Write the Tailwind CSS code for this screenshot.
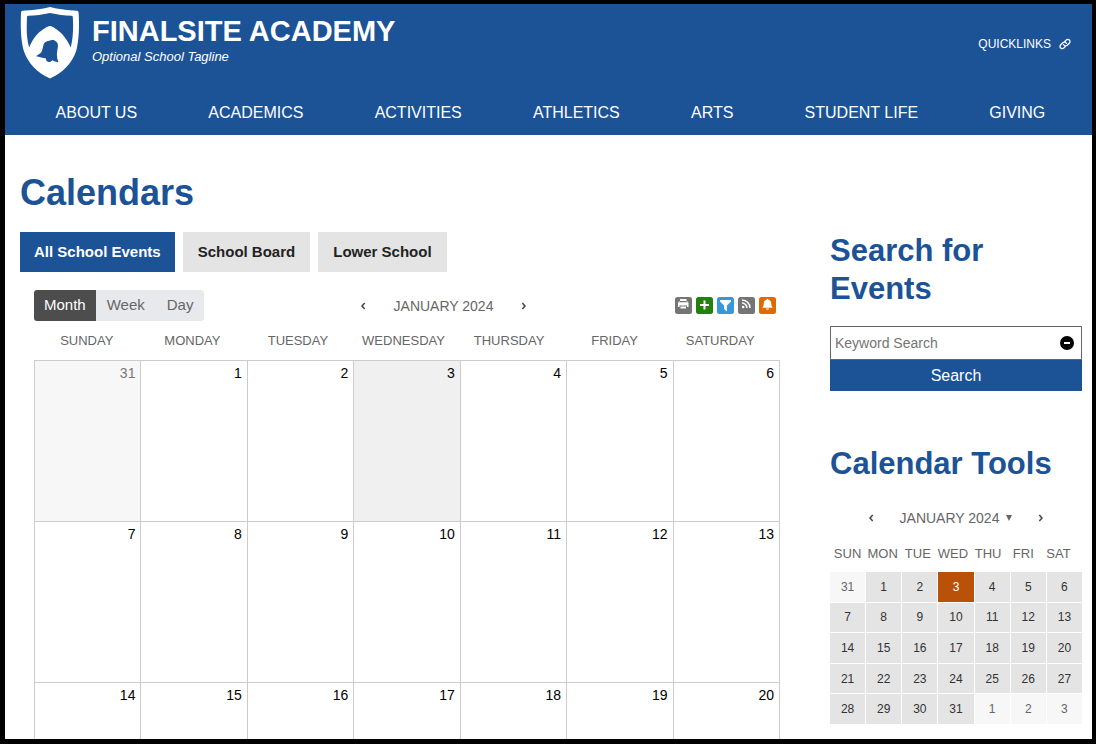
<!DOCTYPE html>
<html lang="en">
<head>
    <meta charset="UTF-8">
    <meta name="viewport" content="width=device-width, initial-scale=1.0">
    <title>Calendars - Finalsite Academy</title>
    <script src="https://cdn.jsdelivr.net/npm/@tailwindcss/browser@4"></script>
</head>
<body class="h-screen overflow-hidden bg-white border-black border-t-4 border-r-4 border-b-5 border-l-5 font-['Liberation_Sans',Arial,sans-serif] text-black">

    <!-- Header -->
    <header class="bg-[#1c5296] text-white px-[15px] h-[131px] flex flex-col justify-between">
        <div class="flex items-start justify-between">
            <a href="#" class="flex items-start gap-3 pt-[3px]">
                <svg class="w-[60px] h-[72px]" viewBox="0 0 60 72" aria-hidden="true">
                    <path fill="#fff" d="M30 0C38 2 49 3.500 57 3.700Q58.500 3.800 58.600 5.500C59.500 20 59 32 56.500 43C52.500 56 42 66.500 30 71.500C18 66.500 7.500 56 3.500 43C.700 32 .500 20 1 5.500Q1.200 3.800 2.500 3.700C11 3.500 22 2 30 0Z"/>
                    <path fill="#1c5296" d="M30 6C37 7.700 45 8.500 51.500 8.700Q52.700 8.800 52.800 10C53.500 22 53 32 50.700 40.500C47.500 33 43.500 28.500 41 26C37.500 23 33 19.200 30 19C27 19.200 22 23 18.500 26C16 28.500 12 33 9.300 40.500C6.500 32 6.500 22 7 10Q7.100 8.800 8.300 8.700C15 8.500 23 7.700 30 6Z"/>
                    <path fill="#1c5296" d="M31 33.200C32.500 32.800 34.500 33 35.700 34.300C37.500 35.700 38.200 37 37.900 39.500C37.300 44 36.800 46 36.900 48C37 50.500 37.500 53 38.400 55.300C36 54.700 34 54 32.300 53.200C31.500 54.300 30 55.200 28.700 55C27 54.700 25.800 53.500 26 51.500C23 51 19.500 50 16 49.300C18.500 47.500 20.500 46.500 21.600 44.800C22.800 42.500 22.700 39 24.200 36.300C25.500 34.200 28.500 33.700 31 33.200Z"/>
                </svg>
                <span class="flex flex-col pt-2">
                    <span class="text-[29px] leading-8 font-bold">FINALSITE ACADEMY</span>
                    <span class="text-[13px] leading-5 italic">Optional School Tagline</span>
                </span>
            </a>
            <a href="#" class="flex items-center gap-2 text-xs mt-8 mr-1.5">
                QUICKLINKS
                <svg class="size-3" viewBox="0 0 24 24" fill="none" stroke="currentColor" stroke-width="2.500" stroke-linecap="round" aria-hidden="true">
                    <path d="M9 13c1.500 3 5 3.500 7.500 1.500l4-4c4-5-1.500-10-6-6.500L11.500 7"/>
                    <path d="M15 11c-1.500-3-5-3.500-7.500-1.500l-4 4c-4 5 1.500 10 6 6.500L12.500 17"/>
                </svg>
            </a>
        </div>
        <nav class="flex justify-around -mr-1 pb-2.5 text-base">
            <a href="#">ABOUT US</a>
            <a href="#">ACADEMICS</a>
            <a href="#">ACTIVITIES</a>
            <a href="#">ATHLETICS</a>
            <a href="#">ARTS</a>
            <a href="#">STUDENT LIFE</a>
            <a href="#">GIVING</a>
        </nav>
    </header>

    <div class="pl-[15px] pr-2.5 pt-9">
        <h1 class="text-4xl leading-[44px] font-bold text-[#1c5296] mb-[17px]">Calendars</h1>

        <div class="flex gap-9">
            <!-- Main calendar -->
            <main class="flex-1 min-w-0">
                <div class="flex gap-2 text-[15px] font-bold text-[#222]">
                    <button class="h-10 px-3.5 bg-[#1c5296] text-white">All School Events</button>
                    <button class="h-10 px-[15px] bg-[#e4e4e4]">School Board</button>
                    <button class="h-10 px-[15px] bg-[#e4e4e4]">Lower School</button>
                </div>

                <div class="px-3.5 pt-[18px]">
                    <div class="grid grid-cols-3 items-center">
                        <div class="flex text-[15px] text-[#666]">
                            <button class="h-[31px] px-2.5 rounded-l-[3px] bg-[#4d4d4d] text-white">Month</button>
                            <button class="h-[31px] px-[11px] bg-[#e8e9ed]">Week</button>
                            <button class="h-[31px] px-[11px] rounded-r-[3px] bg-[#e8e9ed]">Day</button>
                        </div>
                        <div class="flex items-center justify-center gap-7 pl-[73px] text-sm text-[#666] whitespace-nowrap">
                            <button aria-label="Previous month">
                                <svg class="w-1.5 h-2" viewBox="0 0 6 8" fill="none" stroke="#444" stroke-width="1.500" aria-hidden="true"><path d="M4.700 1L2 4L4.700 7"/></svg>
                            </button>
                            <span>JANUARY 2024</span>
                            <button aria-label="Next month">
                                <svg class="w-1.5 h-2" viewBox="0 0 6 8" fill="none" stroke="#444" stroke-width="1.500" aria-hidden="true"><path d="M1.300 1L4 4L1.300 7"/></svg>
                            </button>
                        </div>
                        <div class="flex justify-end gap-1 pr-1">
                            <button aria-label="Print">
                                <svg class="size-[17px]" viewBox="0 0 17 17" aria-hidden="true">
                                    <rect width="17" height="17" rx="2.500" fill="#757575"/>
                                    <path fill="#fff" d="M5 2h6.500v2.500H5zM3 5.500h10.500v4.500H12V8.500H4.500V10H3zM5.500 9.500h5.500v2H5.500z"/>
                                    <path fill="#fff" d="M3 5.500L4 4.500h8.500l1 1z"/>
                                    <path stroke="#757575" d="M5 4.500h6.500"/>
                                </svg>
                            </button>
                            <button aria-label="Add">
                                <svg class="size-[17px]" viewBox="0 0 17 17" aria-hidden="true">
                                    <rect width="17" height="17" rx="2.500" fill="#23800f"/>
                                    <path stroke="#fff" stroke-width="2" d="M8.500 3.500v9M4 8h9"/>
                                </svg>
                            </button>
                            <button aria-label="Filter">
                                <svg class="size-[17px]" viewBox="0 0 17 17" aria-hidden="true">
                                    <rect width="17" height="17" rx="2.500" fill="#3498db"/>
                                    <path fill="#fff" d="M3 3h11v1.500L10 8.500v6L7 12V8.500L3 4.500z"/>
                                </svg>
                            </button>
                            <button aria-label="RSS feed">
                                <svg class="size-[17px]" viewBox="0 0 17 17" aria-hidden="true">
                                    <rect width="17" height="17" rx="2.500" fill="#757575"/>
                                    <circle cx="5.200" cy="10" r="1.300" fill="#fff"/>
                                    <path fill="none" stroke="#fff" stroke-width="1.500" d="M4 6a5 5 0 0 1 5 5M4 3a8 8 0 0 1 8 8"/>
                                </svg>
                            </button>
                            <button aria-label="Alerts">
                                <svg class="size-[17px]" viewBox="0 0 17 17" aria-hidden="true">
                                    <rect width="17" height="17" rx="2.500" fill="#dd6b00"/>
                                    <path fill="#fff" d="M8.500 1.800c.600 0 .900.400.900.900C11.500 3.200 12.300 4.800 12.300 7c0 2 .700 3 1.700 3.800H3C4 10 4.700 9 4.700 7c0-2.200.800-3.800 2.900-4.300 0-.500.300-.900.900-.900zM7 11.500h3a1.500 1.300 0 0 1-3 0z"/>
                                </svg>
                            </button>
                        </div>
                    </div>

                    <table class="block text-sm [&_tr]:grid [&_tr]:grid-cols-7 [&_td]:h-[161px] [&_td]:border-t [&_td]:border-l [&_td]:border-[#ccc] [&_td]:text-right [&_td]:pr-[5px] [&_td]:pt-0.5">
                        <thead class="block pr-[7px] text-[13px] leading-[39px] text-[#666] [&_th]:font-normal">
                            <tr>
                                <th>SUNDAY</th>
                                <th>MONDAY</th>
                                <th>TUESDAY</th>
                                <th>WEDNESDAY</th>
                                <th>THURSDAY</th>
                                <th>FRIDAY</th>
                                <th>SATURDAY</th>
                            </tr>
                        </thead>
                        <tbody class="block border-r border-[#ccc]">
                            <tr>
                                <td class="bg-[#f7f7f7] text-[#777]">31</td>
                                <td>1</td>
                                <td>2</td>
                                <td class="bg-[#f0f0f0]">3</td>
                                <td>4</td>
                                <td>5</td>
                                <td>6</td>
                            </tr>
                            <tr>
                                <td>7</td>
                                <td>8</td>
                                <td>9</td>
                                <td>10</td>
                                <td>11</td>
                                <td>12</td>
                                <td>13</td>
                            </tr>
                            <tr>
                                <td>14</td>
                                <td>15</td>
                                <td>16</td>
                                <td>17</td>
                                <td>18</td>
                                <td>19</td>
                                <td>20</td>
                            </tr>
                        </tbody>
                    </table>
                </div>
            </main>

            <!-- Sidebar -->
            <aside class="w-[252px] shrink-0">
                <h2 class="text-[31px] leading-[38px] font-bold text-[#1c5296] mb-[18px]">Search for Events</h2>
                <form>
                    <div class="relative">
                        <input type="text" aria-label="Keyword Search" placeholder="Keyword Search"
                               class="block w-full h-[34px] border border-[#666] pl-1 pr-8 text-sm placeholder:text-[#757575]">
                        <button type="button" aria-label="Toggle search options" class="absolute right-2 top-[10px]">
                            <svg class="block size-[14px]" viewBox="0 0 14 14" aria-hidden="true">
                                <circle cx="7" cy="7" r="7" fill="#000"/>
                                <path stroke="#fff" stroke-width="2" d="M4 7h6"/>
                            </svg>
                        </button>
                    </div>
                    <button type="button" class="block w-full h-[31px] bg-[#1c5296] text-white text-base">Search</button>
                </form>

                <h2 class="text-[31px] leading-[38px] font-bold text-[#1c5296] mt-[54px] mb-[25px]">Calendar Tools</h2>
                <div class="flex items-center justify-center gap-[26px] text-sm text-[#666]">
                    <button aria-label="Previous month">
                        <svg class="w-1.5 h-2" viewBox="0 0 6 8" fill="none" stroke="#444" stroke-width="1.500" aria-hidden="true"><path d="M4.700 1L2 4L4.700 7"/></svg>
                    </button>
                    <button class="flex items-center gap-[7px]">
                        JANUARY 2024
                        <svg class="size-1.5" viewBox="0 0 6 6" fill="#666" aria-hidden="true"><path d="M0 0h6L3 6z"/></svg>
                    </button>
                    <button aria-label="Next month">
                        <svg class="w-1.5 h-2" viewBox="0 0 6 8" fill="none" stroke="#444" stroke-width="1.500" aria-hidden="true"><path d="M1.300 1L4 4L1.300 7"/></svg>
                    </button>
                </div>

                <table class="block mt-4 text-xs text-[#333] [&_tr]:grid [&_tr]:grid-cols-7 [&_td]:flex [&_td]:items-center [&_td]:justify-center">
                    <thead class="block pr-1.5 pb-2 text-[13px] leading-5 text-[#666] [&_th]:font-normal">
                        <tr>
                            <th>SUN</th>
                            <th>MON</th>
                            <th>TUE</th>
                            <th>WED</th>
                            <th>THU</th>
                            <th>FRI</th>
                            <th>SAT</th>
                        </tr>
                    </thead>
                    <tbody class="grid grid-rows-5 gap-px h-[152px] [&_tr]:gap-px">
                        <tr>
                            <td class="bg-[#f7f7f7] text-[#666]">31</td>
                            <td class="bg-[#e4e4e4]">1</td>
                            <td class="bg-[#e4e4e4]">2</td>
                            <td class="bg-[#b95208] text-white">3</td>
                            <td class="bg-[#e4e4e4]">4</td>
                            <td class="bg-[#e4e4e4]">5</td>
                            <td class="bg-[#e4e4e4]">6</td>
                        </tr>
                        <tr>
                            <td class="bg-[#e4e4e4]">7</td>
                            <td class="bg-[#e4e4e4]">8</td>
                            <td class="bg-[#e4e4e4]">9</td>
                            <td class="bg-[#e4e4e4]">10</td>
                            <td class="bg-[#e4e4e4]">11</td>
                            <td class="bg-[#e4e4e4]">12</td>
                            <td class="bg-[#e4e4e4]">13</td>
                        </tr>
                        <tr>
                            <td class="bg-[#e4e4e4]">14</td>
                            <td class="bg-[#e4e4e4]">15</td>
                            <td class="bg-[#e4e4e4]">16</td>
                            <td class="bg-[#e4e4e4]">17</td>
                            <td class="bg-[#e4e4e4]">18</td>
                            <td class="bg-[#e4e4e4]">19</td>
                            <td class="bg-[#e4e4e4]">20</td>
                        </tr>
                        <tr>
                            <td class="bg-[#e4e4e4]">21</td>
                            <td class="bg-[#e4e4e4]">22</td>
                            <td class="bg-[#e4e4e4]">23</td>
                            <td class="bg-[#e4e4e4]">24</td>
                            <td class="bg-[#e4e4e4]">25</td>
                            <td class="bg-[#e4e4e4]">26</td>
                            <td class="bg-[#e4e4e4]">27</td>
                        </tr>
                        <tr>
                            <td class="bg-[#e4e4e4]">28</td>
                            <td class="bg-[#e4e4e4]">29</td>
                            <td class="bg-[#e4e4e4]">30</td>
                            <td class="bg-[#e4e4e4]">31</td>
                            <td class="bg-[#f7f7f7] text-[#666]">1</td>
                            <td class="bg-[#f7f7f7] text-[#666]">2</td>
                            <td class="bg-[#f7f7f7] text-[#666]">3</td>
                        </tr>
                    </tbody>
                </table>
            </aside>
        </div>
    </div>
</body>
</html>
